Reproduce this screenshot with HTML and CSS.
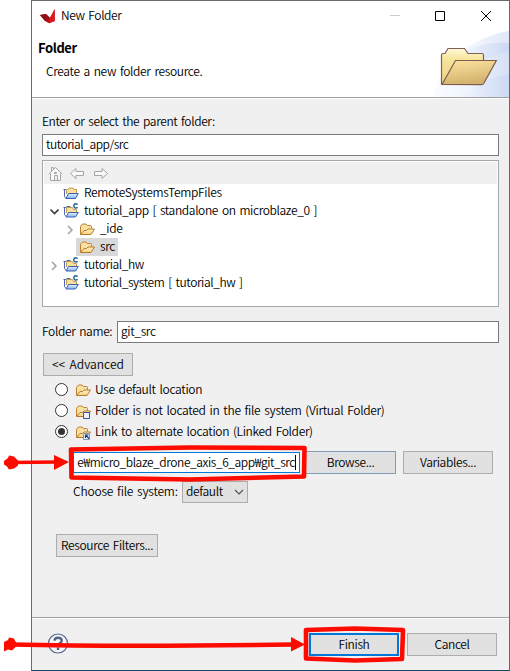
FILE: index.html
```
<!DOCTYPE html>
<html lang="en">
<head>
<meta charset="utf-8">
<title>New Folder</title>
<link rel="stylesheet" href="styles.css">
</head>
<body>
<svg class="defs" width="0" height="0" aria-hidden="true">
  <defs>
    <linearGradient id="gold" x1="0" y1="0" x2="0" y2="1"><stop offset="0" stop-color="#fff3c5"/><stop offset="1" stop-color="#f5cf80"/></linearGradient>
    <linearGradient id="blue" x1="0" y1="0" x2="0" y2="1"><stop offset="0" stop-color="#e2f0ff"/><stop offset="1" stop-color="#86b6f0"/></linearGradient>
    <symbol id="folder" viewBox="0 0 16 16">
      <path d="M1.500 13V5.500q0-1 1-1L3.500 3h3.500l1.500 1.500h3q1 0 1 1v2" fill="#f8dfa4" stroke="#bd8133"/>
      <path d="M1.500 13.500L5 9.500h2.500l1.500-1.500h6.500L12 13.500z" fill="url(#gold)" stroke="#b8782b"/>
    </symbol>
    <symbol id="project" viewBox="0 0 16 16">
      <path d="M3.500 9V4.500h1.500l1-1.500h4l1 1.500h2.500V9" fill="#fbdf9c" stroke="#c19a57"/>
      <path d="M.5 4.500h2.500M1.500 4.500v7l1.500 2" fill="none" stroke="#4b67b1"/>
      <path d="M3 13.500L5.500 8.500h9.800l-2.800 5z" fill="url(#blue)" stroke="#3d5fae"/>
    </symbol>
    <symbol id="cproject" viewBox="0 0 16 16">
      <path d="M3.500 10V4.500h6l1 2h3V10" fill="#fbdf9c" stroke="#c19a57"/>
      <path d="M.5 4.500h2.500M1.500 4.500v7l1.500 2M3.500 3.500h4" fill="none" stroke="#4b67b1"/>
      <path d="M3 14L5.500 9.500h9.800L12.500 14z" fill="url(#blue)" stroke="#3d5fae"/>
      <path d="M14.600 1.500C12.400 0 10.700 1.100 10.800 3c.1 1.800 2 2.700 3.800 1.400" fill="none" stroke="#1f6696" stroke-width="1.500"/>
    </symbol>
    <symbol id="right" viewBox="0 0 10 10"><path d="M3 2l4 4-4 4" fill="none" stroke="#a0a0a0" stroke-width="1.500"/></symbol>
    <symbol id="down" viewBox="0 0 10 10"><path d="M1.500 3.500l4 4 4-4" fill="none" stroke="#404040" stroke-width="1.700"/></symbol>
  </defs>
</svg>
<main class="window">
  <header class="titlebar">
    <svg class="logo" width="16" height="16" viewBox="0 0 16 16"><path d="M0 7L6 6l4 4 4.700-9v12L9 15.300 5 13z" fill="#c20d14"/><path d="M0 7l6-1 4 4-1 1L5 13z" fill="#8d1018"/><path d="M14.700 1v12L9 15.300 10 10z" fill="#db171c"/></svg>
    <span class="t-title">New Folder</span>
    <svg class="controls" width="101" height="12" viewBox="0 0 101 12"><path d="M0 5.500h10" stroke="#ccc"/><path d="M45.500 1.500h9v9h-9z" fill="none" stroke="#000"/><path d="M91 1l10 10M101 1L91 11" stroke="#000"/></svg>
  </header>
  <section class="banner">
    <div class="heading"><h1>Folder</h1><p class="t-desc">Create a new folder resource.</p></div>
    <svg class="art" width="75" height="66" viewBox="0 0 75 66">
      <defs>
        <linearGradient id="haze"><stop offset="0" stop-color="#fafcff"/><stop offset=".5" stop-color="#eaf0fc"/><stop offset="1" stop-color="#ccd9f3"/></linearGradient>
        <linearGradient id="back" x1="0" y1="0" x2="0" y2="1"><stop offset="0" stop-color="#fff9d9"/><stop offset=".3" stop-color="#f6e59b"/><stop offset="1" stop-color="#ecd181"/></linearGradient>
        <linearGradient id="front" x1="0" y1="0" x2=".3" y2="1"><stop offset="0" stop-color="#ffe4a3"/><stop offset="1" stop-color="#d2b36d"/></linearGradient>
      </defs>
      <path d="M75 0C35 7 3 34 0 66h75z" fill="url(#haze)"/>
      <path d="M75 0C50 4 34 14 25 23 40 14 58 11 75 12z" fill="#fff" opacity=".4"/>
      <path d="M75 21C47 26 22 43 10 66h20c10-12 25-19 45-23z" fill="#fff" opacity=".2"/>
      <path d="M7.500 53V24q0-1.500 1.500-1.500h2l3-5h16.500l3.500 5H48q1.500 0 1.500 1.500v10z" fill="url(#back)" stroke="#7d6259" stroke-width="1.200"/>
      <path d="M8 53.500L21.500 29.500h40.800L50 52q-1 1.600-2.500 1.600z" fill="url(#front)" stroke="#7d5c52" stroke-width="1.200"/>
    </svg>
  </section>
  <section class="body">
    <label class="parent-label t-enter">Enter or select the parent folder:</label>
    <div class="input parent-input"><span class="t-path">tutorial_app/src</span></div>
    <div class="tree">
      <div class="toolbar">
        <svg width="60" height="16" viewBox="0 0 60 16" fill="#f8f8f8" stroke="#a5a5a5">
          <path d="M2.500 7.500V14.500h10V7.500M.8 8L7.500 1.500 14.200 8M3.500 5V1.500h2V3M6.500 14V9.500h3V14M6.500 6.500h2v1h-2z"/>
          <path d="M22.500 7.500L28 2.500V5.500h7.500v4H28v3zM59.500 7.500L54 2.500V5.500h-7.500v4H54v3z"/>
        </svg>
      </div>
      <div class="row l1"><i></i><svg width="16" height="16"><use href="#project"/></svg><span class="t-remote">RemoteSystemsTempFiles</span></div>
      <div class="row l1"><svg class="tw" width="10" height="10"><use href="#down"/></svg><svg width="16" height="16"><use href="#cproject"/></svg><span class="t-app">tutorial_app [ standalone on microblaze_0 ]</span></div>
      <div class="row l2"><svg class="tw" width="10" height="10"><use href="#right"/></svg><svg width="16" height="16"><use href="#folder"/></svg><span class="t-ide">_ide</span></div>
      <div class="row l2"><i></i><div class="selected"><svg width="16" height="16"><use href="#folder"/></svg><span class="t-src">src</span></div></div>
      <div class="row l1"><svg class="tw" width="10" height="10"><use href="#right"/></svg><svg width="16" height="16"><use href="#cproject"/></svg><span class="t-hw">tutorial_hw</span></div>
      <div class="row l1"><i></i><svg width="16" height="16"><use href="#cproject"/></svg><span class="t-sys">tutorial_system [ tutorial_hw ]</span></div>
    </div>
    <div class="name-row"><label class="t-name">Folder name:</label><div class="input"><span class="t-git">git_src</span></div></div>
    <button class="advanced"><span class="t-adv">&lt;&lt; Advanced</span></button>
    <div class="radios">
      <div class="radio"><b></b><svg width="16" height="16"><use href="#folder"/></svg><span class="t-r1">Use default location</span></div>
      <div class="radio"><b></b><svg width="16" height="16" viewBox="0 0 16 16"><use href="#folder"/><path d="M8.500 9.500h6v6h-6z" fill="#e8f2ff" stroke="#36589b"/></svg><span class="t-r2">Folder is not located in the file system (Virtual Folder)</span></div>
      <div class="radio"><b class="on"></b><svg width="16" height="16" viewBox="0 0 16 16"><use href="#folder"/><path d="M8.500 9.500h6v6h-6z" fill="#e8f2ff" stroke="#8794ad"/><path d="M10.500 14v-3h3M11 11.500l3 3" fill="none" stroke="#123c78" stroke-width="1.200"/></svg><span class="t-r3">Link to alternate location (Linked Folder)</span></div>
    </div>
    <div class="link-row"><div class="input focused"><div class="clip"><span class="t-link">e₩micro_blaze_drone_axis_6_app₩git_src</span></div><em></em></div><button class="browse"><span class="t-browse">Browse...</span></button><button class="variables"><span class="t-var">Variables...</span></button></div>
    <div class="fs-row"><label class="t-fs">Choose file system:</label><div class="combo"><span class="t-def">default</span><svg width="10" height="8" viewBox="0 0 10 8"><path d="M1 2l4 4 4-4" fill="none" stroke="#505050" stroke-width="1.100"/></svg></div></div>
    <button class="filters"><span class="t-filter">Resource Filters...</span></button>
  </section>
  <footer class="footer">
    <svg class="help" width="22" height="22" viewBox="0 0 22 22"><circle cx="11" cy="10.500" r="9.500" fill="#f5f6f8" stroke="#5b6b8b" stroke-width="1.200"/><path d="M7.500 7.700Q7.700 4.700 11 4.700q3.700 0 3.700 2.900 0 1.700-2 2.700-1.700.900-1.700 2.200M11 14.500v2.500" fill="none" stroke="#536586" stroke-width="2.400"/></svg>
    <button class="finish"><span class="t-finish">Finish</span></button><button class="cancel"><span class="t-cancel">Cancel</span></button>
  </footer>
</main>
<svg class="marks" width="510" height="671" viewBox="0 0 510 671" fill="none" stroke="#fe0b00">
  <path d="M11 462.500L60 462" stroke-width="3.700"/>
  <path d="M4 461l4-3 1-2.500 5 1 4 4v5l-4 3-5 1-2-3-3-2z" fill="#fe0b00" stroke="none"/>
  <path d="M54 455l15 7-15 8z" fill="#fe0b00" stroke="none"/>
  <path d="M71 449.500L190 447.500 304.500 448 304 476.500 190 479.500 71.500 477.500z" stroke-width="4.600" stroke-linejoin="round"/>
  <path d="M11 644.500Q125 647 292 644.500" stroke-width="4.300"/>
  <path d="M4 642l4-2 1-2.500 5 1 2 4v4l-4 4-4-1-4 2z" fill="#fe0b00" stroke="none"/>
  <path d="M291 637l14 7.500-14 7z" fill="#fe0b00" stroke="none"/>
  <path d="M306 630L355 628.500 403 630 402 659 355 660.500 306 658.500z" stroke-width="4.600" stroke-linejoin="round"/>
</svg>
</body>
</html>
```
FILE: styles.css
```
* { box-sizing: border-box; }
body { margin: 0; background: #fff; width: 510px; height: 671px; overflow: hidden; font: 350 12px/18px "Noto Sans CJK KR", "Open Sans", sans-serif; letter-spacing: -.35px; word-spacing: 1.5px; color: #000; position: relative; }
.defs, .marks { position: absolute; left: 0; top: 0; }
svg { flex: none; display: block; }
span, label, h1, p { white-space: nowrap; }
span, .name-row label, .fs-row label { display: block; padding-bottom: 2px; }
.window { margin-left: 31px; width: 479px; height: 671px; border: 1px solid #6a6a6a; border-bottom-color: #174966; background: #f0f0f0; display: flex; flex-direction: column; }
.titlebar { height: 30px; background: #fff; display: flex; align-items: center; padding: 0 18px 0 8px; }
.logo { margin-right: 5px; }
.controls { margin-left: auto; }
.banner { height: 67px; background: #fff; border-bottom: 1px solid #a0a0a0; display: flex; justify-content: space-between; }
.heading { padding: 8px 0 0 6px; }
h1 { margin: 0; font-size: 13px; line-height: 18px; font-weight: 700; letter-spacing: -.4px; }
p { margin: 5px 0 0 8px; }
.body { height: 520px; border-top: 1px solid #fff; border-bottom: 1px solid #a0a0a0; padding: 13px 10px 0; display: flex; flex-direction: column; align-items: flex-start; }
.input { border: 1px solid #7a7a7a; background: #fff; height: 22px; display: flex; align-items: center; padding-left: 3px; }
.parent-label { height: 22px; }
.parent-input { width: 457px; }
.tree { width: 457px; height: 147px; margin-top: 4px; border: 1px solid #a4a7ad; background: #fff; padding: 1px; }
.toolbar { height: 22px; background: #f0f0f0; padding: 4px 0 0 4px; }
.row { display: flex; align-items: center; height: 18px; }
.row i, .tw { width: 10px; margin-right: 4px; }
.l1 { padding-left: 5px; }
.l2 { padding-left: 21px; }
.row > span { margin-left: 5px; }
.row.l2 i { margin-right: 0; }
.selected { display: flex; align-items: center; height: 18px; width: 42px; background: #d9d9d9; padding-left: 3px; margin-left: 1px; }
.selected span { margin-left: 5px; }
.name-row { display: flex; align-items: center; margin-top: 14px; height: 22px; width: 457px; }
.name-row label { width: 75px; }
.name-row .input { flex: 1; }
button { font: inherit; letter-spacing: inherit; word-spacing: inherit; color: inherit; background: #e1e1e1; border: 1px solid #adadad; height: 23px; padding: 0; display: flex; align-items: center; justify-content: center; }
.advanced { width: 90px; margin: 10px 0 0 1px; }
.radios { margin: 3px 0 0 13px; }
.radio { display: flex; align-items: center; height: 21px; }
.radio b { width: 13px; height: 13px; border: 1px solid #333; border-radius: 50%; background: #fff; margin-right: 7px; padding: 2px; }
.radio b.on::before { content: ""; display: block; width: 7px; height: 7px; border-radius: 50%; background: #333; }
.radio span { margin-left: 4px; }
.link-row { display: flex; align-items: center; margin: 9px 0 0 31px; height: 23px; }
.focused { width: 227px; border-color: #0078d7; height: 21px; }
.clip { width: 218px; overflow: hidden; display: flex; justify-content: flex-end; }
.focused em { width: 1px; height: 15px; background: #000; }
.browse { width: 91px; margin-left: 5px; border-color: #7f9db9; }
.variables { width: 90px; margin-left: 7px; }
.fs-row { display: flex; align-items: center; margin: 6px 0 0 31px; height: 23px; }
.fs-row label { width: 109px; }
.combo { width: 66px; height: 22px; border: 1px solid #adadad; background: #e1e1e1; display: flex; align-items: center; justify-content: space-between; padding: 0 3px; }
.filters { width: 102px; margin: 31px 0 0 14px; }
.footer { flex: 1; border-top: 1px solid #fff; display: flex; align-items: flex-start; padding: 14px 12px 0 15px; }
.finish { width: 90px; margin-left: auto; border: 2px solid #0078d7; }
.cancel { width: 90px; margin-left: 8px; }
.t-title { letter-spacing: -.4px; }
.t-enter { letter-spacing: -.39px; }
.t-app { letter-spacing: -.37px; }
.t-sys, .t-hw { letter-spacing: -.41px; }
.t-path { letter-spacing: -.47px; }
.t-link { letter-spacing: -.43px; }
.t-remote { letter-spacing: -.32px; }
.t-r1 { letter-spacing: -.31px; }
.t-r2 { letter-spacing: -.29px; }
.t-fs { letter-spacing: -.22px; }
.t-r3 { letter-spacing: -.33px; }
.t-adv { letter-spacing: .05px; }
```
